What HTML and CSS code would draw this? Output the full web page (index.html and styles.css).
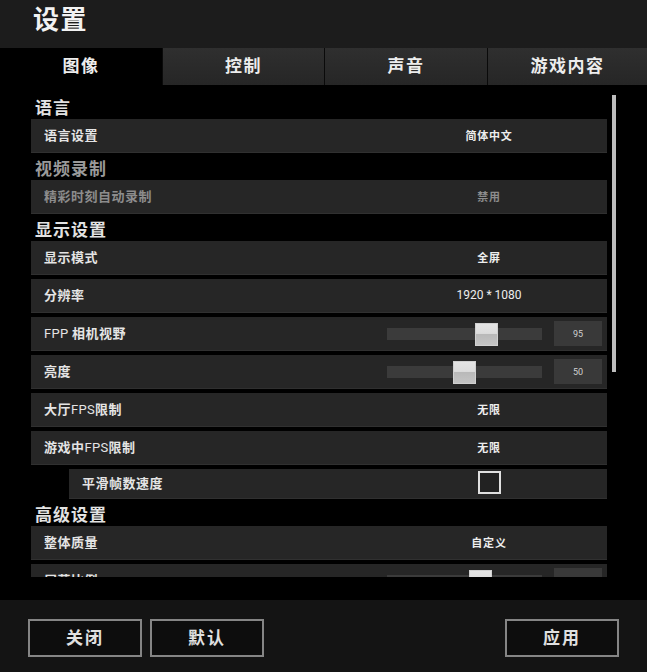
FILE: index.html
```html
<!DOCTYPE html>
<html lang="zh-CN">
<head>
<meta charset="utf-8">
<title>设置</title>
<link rel="stylesheet" href="styles.css">
</head>
<body>
<div class="app">
  <header class="topbar"><h1 class="title">设置</h1></header>
  <nav class="tabs">
    <div class="tab active">图像</div>
    <div class="tab">控制</div>
    <div class="tab">声音</div>
    <div class="tab">游戏内容</div>
  </nav>
  <main class="content">
    <div class="scroll">
      <div class="section">语言</div>
      <div class="row"><div class="label">语言设置</div><div class="value">简体中文</div></div>

      <div class="section dim">视频录制</div>
      <div class="row disabled"><div class="label">精彩时刻自动录制</div><div class="value">禁用</div></div>

      <div class="section">显示设置</div>
      <div class="row"><div class="label">显示模式</div><div class="value">全屏</div></div>
      <div class="row"><div class="label">分辨率</div><div class="value latin">1920 * 1080</div></div>
      <div class="row"><div class="label"><span class="lat">FPP</span> 相机视野</div>
        <div class="value slider-cell"><div class="track"><div class="thumb" style="left:88px"></div></div><div class="numbox">95</div></div></div>
      <div class="row"><div class="label">亮度</div>
        <div class="value slider-cell"><div class="track"><div class="thumb" style="left:66px"></div></div><div class="numbox">50</div></div></div>
      <div class="row"><div class="label">大厅<span class="lat">FPS</span>限制</div><div class="value">无限</div></div>
      <div class="row"><div class="label">游戏中<span class="lat">FPS</span>限制</div><div class="value">无限</div></div>
      <div class="row sub"><div class="label">平滑帧数速度</div><div class="value"><span class="checkbox"></span></div></div>

      <div class="section">高级设置</div>
      <div class="row"><div class="label">整体质量</div><div class="value">自定义</div></div>
      <div class="row"><div class="label">屏幕比例</div>
        <div class="value slider-cell"><div class="track"><div class="thumb" style="left:82px"></div></div><div class="numbox">100</div></div></div>
    </div>
    <div class="scrollbar"></div>
  </main>
  <footer class="footer">
    <div class="btn-group">
      <button class="btn">关闭</button>
      <button class="btn">默认</button>
    </div>
    <button class="btn">应用</button>
  </footer>
</div>
</body>
</html>
```
FILE: styles.css
```css
* { box-sizing: border-box; margin: 0; padding: 0; }
html, body { width: 647px; height: 672px; background: #000; overflow: hidden; }
body {
  font-family: "Noto Sans CJK SC", "Noto Sans", sans-serif;
  color: #e6e6e6;
}
.app { display: flex; flex-direction: column; height: 672px; }

.topbar {
  height: 48px;
  background: #1c1c1c;
  padding: 0 0 0 33px;
}
.title {
  font-size: 26px;
  font-weight: 700;
  letter-spacing: 1.5px;
  line-height: 36px;
  color: #f2f2f2;
}

.tabs {
  height: 37px;
  display: grid;
  grid-template-columns: 162px 162px 163px 160px;
  background: #000;
}
.tab {
  background: linear-gradient(#2f2f2f, #262626);
  border-left: 1px solid #0a0a0a;
  display: flex;
  align-items: center;
  justify-content: center;
  padding-bottom: 4px;
  font-size: 17px;
  font-weight: 700;
  letter-spacing: 1.5px;
  color: #ededed;
}
.tab.active { background: #000; border-left: none; }

.content {
  position: relative;
  height: 515px;
  background: #000;
}
.scroll {
  height: 492px;
  overflow: hidden;
  padding: 11px 40px 0 31px;
}
.section {
  height: 23px;
  line-height: 21px;
  font-size: 17px;
  font-weight: 700;
  letter-spacing: 1px;
  padding-left: 4px;
  color: #e2e2e2;
}
.section.dim { color: #9a9a9a; }

.row {
  height: 34px;
  margin-bottom: 4px;
  background: #262626;
  border-bottom: 1px solid #303030;
  display: grid;
  grid-template-columns: 1fr 236px;
  align-items: center;
}
.row.sub { height: 30px; margin-left: 38px; grid-template-columns: 1fr 236px; }
.label {
  padding-left: 13px;
  padding-bottom: 2px;
  font-size: 13px;
  font-weight: 700;
  letter-spacing: 0.5px;
  color: #e4e4e4;
}
.lat { font-family: Roboto, "Noto Sans", sans-serif; font-weight: 400; font-size: 13px; letter-spacing: 0.3px; }
.value {
  text-align: center;
  font-size: 11px;
  font-weight: 700;
  letter-spacing: 0.8px;
  color: #ededed;
  display: flex;
  justify-content: center;
  align-items: center;
  padding-bottom: 2px;
}
.value.latin { font-family: Roboto, "Noto Sans", sans-serif; font-weight: 400; font-size: 12px; letter-spacing: 0; }
.row.disabled .label, .row.disabled .value { color: #8c8c8c; }

.slider-cell { justify-content: flex-start; padding-left: 16px; padding-bottom: 0; gap: 12px; }
.track {
  position: relative;
  width: 155px;
  height: 12px;
  background: #3b3b3b;
}
.thumb {
  position: absolute;
  top: -5px;
  width: 23px;
  height: 23px;
  background: linear-gradient(#e4e4e4 0%, #dcdcdc 45%, #b9b9b9 50%, #c4c4c4 100%);
  border: 1px solid #d0d0d0;
}
.numbox {
  width: 48px;
  height: 25px;
  background: #393939;
  display: flex;
  align-items: center;
  justify-content: center;
  font-family: Roboto, "Noto Sans", sans-serif;
  font-weight: 400;
  font-size: 9px;
  color: #d0d0d0;
  letter-spacing: 0;
}
.checkbox {
  display: block;
  width: 23px;
  height: 23px;
  border: 2px solid #e0e0e0;
  background: #222;
}

.scrollbar {
  position: absolute;
  left: 612px;
  top: 10px;
  width: 4px;
  height: 277px;
  background: #bdbdbd;
}

.footer {
  flex: 1;
  background: #141414;
  display: flex;
  justify-content: space-between;
  align-items: flex-start;
  padding: 19px 28px 0 28px;
}
.btn-group { display: flex; gap: 8px; }
.btn {
  width: 114px;
  height: 38px;
  background: #0d0d0d;
  border: 2px solid #858585;
  color: #e0e0e0;
  font-family: "Noto Sans CJK SC", sans-serif;
  font-size: 17px;
  font-weight: 700;
  letter-spacing: 2px;
  padding-bottom: 3px;
}
```
